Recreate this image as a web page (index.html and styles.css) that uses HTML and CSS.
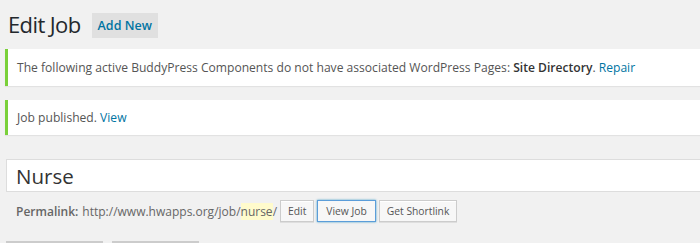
FILE: index.html
```html
<!doctype html>
<html lang="en">
<head>
    <meta charset="utf-8">
    <title>Edit Job</title>
    <link rel="stylesheet" href="styles.css">
</head>
<body>
<div class="wrap">

    <!--  title  -->
    <div class="pageTitle">
        <h1>Edit Job</h1>
        <a class="addNew" href="#">Add New</a>
    </div>

    <!--  notices  -->
    <div class="notice">
        <p>The following active BuddyPress Components do not have associated WordPress Pages: <strong>Site Directory</strong>. <a href="#">Repair</a></p>
    </div>
    <div class="notice">
        <p>Job published. <a href="#">View</a></p>
    </div>

    <!--  title input  -->
    <div class="titleWrap">
        <input class="titleInput" type="text" value="Nurse">
    </div>
    <div class="permalink">
        <strong>Permalink:</strong>
        <span class="url">http://www.hwapps.org/job/<span class="slug">nurse</span>/</span>
        <span class="btn">Edit</span>
        <span class="btn focus">View Job</span>
        <span class="btn">Get Shortlink</span>
    </div>

    <!--  media buttons  -->
    <div class="mediaRow">
        <span class="mediaBtn wide"></span>
        <span class="mediaBtn"></span>
    </div>
</div>
</body>
</html>
```

FILE: styles.css
```css
* {
    margin: 0;
    padding: 0;
    box-sizing: border-box;
}

a {
    text-decoration: none;
    color: #0074a2;
}

html, body {
    background: #f1f1f1;
    font-family: "Open Sans", "Liberation Sans", sans-serif;
    color: #444;
    height: 100%;
    overflow: hidden;
}

.wrap {
    padding: 0 0 0 5px;
}

.pageTitle {
    display: flex;
    align-items: center;
    height: 49px;
    padding: 0 0 0 3px;
}

.pageTitle h1 {
    font-size: 22px;
    font-weight: 400;
    color: #23282d;
    margin-right: 11px;
    line-height: 1;
    letter-spacing: -0.6px;
    margin-top: -2px;
}

.pageTitle .addNew {
    background: #e0e0e0;
    font-size: 12.5px;
    font-weight: 600;
    height: 25px;
    line-height: 25px;
    padding: 0 6px;
    white-space: nowrap;
    margin-top: 1px;
}

.notice {
    background: #fff;
    border-left: 3px solid #7ad03a;
    box-shadow: 0 1px 1px rgba(0, 0, 0, .06);
    height: 37px;
    display: flex;
    align-items: center;
    padding-left: 9px;
    margin-bottom: 14px;
    font-size: 12.1px;
    color: #555;
}

.notice + .notice {
    height: 35px;
    margin-bottom: 24px;
}

.notice strong {
    font-weight: 600;
    color: #333;
}

.titleWrap {
    padding-left: 1px;
}

.titleInput {
    display: block;
    width: 100%;
    height: 33px;
    border: 1px solid #ddd;
    border-right: none;
    background: #fff;
    font-family: "Open Sans", "Liberation Sans", sans-serif;
    font-size: 20.5px;
    color: #333;
    padding: 0 9px;
    outline: none;
}

.permalink {
    display: flex;
    align-items: center;
    height: 22px;
    margin-top: 8px;
    padding-left: 11px;
    font-size: 12px;
    color: #666;
}

.permalink strong {
    font-weight: 600;
    margin-right: 4px;
}

.permalink .url {
    margin-right: 3px;
}

.permalink .slug {
    background: #fffbcc;
}

.btn {
    display: inline-block;
    height: 22px;
    line-height: 20px;
    padding: 0 7px;
    border: 1px solid #ccc;
    background: #f7f7f7;
    font-size: 10.3px;
    color: #555;
    margin-right: 3px;
    box-shadow: 0 1px 0 #fff inset, 0 1px 0 rgba(0, 0, 0, .08);
}

.btn.focus {
    border-color: #5b9dd9;
    box-shadow: 0 0 2px rgba(30, 140, 190, .8);
    padding: 0 8px;
}

.mediaRow {
    display: flex;
    gap: 9px;
    margin-top: 19px;
    padding-left: 1px;
}

.mediaBtn {
    display: block;
    width: 87px;
    height: 2px;
    border-top: 2px solid #ccc;
}

.mediaBtn.wide {
    width: 97px;
}
```
